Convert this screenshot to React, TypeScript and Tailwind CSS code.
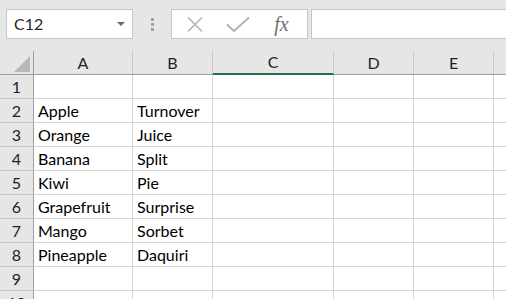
import React from "react";

const cols = [
  { key: "A", w: "w-[99px]" },
  { key: "B", w: "w-[80px]" },
  { key: "C", w: "w-[121px]" },
  { key: "D", w: "w-[80px]" },
  { key: "E", w: "w-[80px]" },
  { key: "", w: "w-[80px]" },
];

const data: Record<number, [string, string]> = {
  2: ["Apple", "Turnover"],
  3: ["Orange", "Juice"],
  4: ["Banana", "Split"],
  5: ["Kiwi", "Pie"],
  6: ["Grapefruit", "Surprise"],
  7: ["Mango", "Sorbet"],
  8: ["Pineapple", "Daquiri"],
};

const rows = [1, 2, 3, 4, 5, 6, 7, 8, 9, 10];

export default function App() {
  return (
    <div
      className="w-[506px] h-[299px] overflow-hidden bg-[#e6e6e6] text-[#1f1f1f]"
      style={{ fontFamily: "Lato, 'Open Sans', sans-serif" }}
    >
      {/* Formula bar */}
      <div className="h-[51px] flex items-start pt-[9px] pl-[6px]">
        <div className="w-[127px] h-[30px] bg-white border border-[#c6c6c6] flex items-center justify-between pl-[7px] pr-[7px]">
          <span className="text-[16px] text-[#262626]">C12</span>
          <svg width="8" height="4" viewBox="0 0 8 4">
            <path d="M0 0 H8 L4 4 Z" fill="#6b6b6b" />
          </svg>
        </div>
        <div className="w-[38px] h-[30px] flex flex-col items-center justify-center gap-[2px]">
          <div className="w-[3px] h-[3px] bg-[#a3a3a3]" />
          <div className="w-[3px] h-[3px] bg-[#a3a3a3]" />
          <div className="w-[3px] h-[3px] bg-[#a3a3a3]" />
        </div>
        <div className="w-[137px] h-[30px] bg-white border border-[#c6c6c6] flex items-center">
          <div className="w-[44px] flex justify-center pl-[2px]">
            <svg width="16" height="15" viewBox="0 0 16 15">
              <path d="M1 0.5 L15 14.5 M15 0.5 L1 14.5" stroke="#b3b3b3" strokeWidth="1.6" />
            </svg>
          </div>
          <div className="w-[44px] flex justify-center">
            <svg width="24" height="15" viewBox="0 0 24 15">
              <path d="M1 7.5 L8 14 L23 0.5" stroke="#b3b3b3" strokeWidth="2" fill="none" />
            </svg>
          </div>
          <div className="flex-1 flex justify-center pr-[4px]">
            <span
              className="italic text-[20px] leading-none text-[#6e6e6e]"
              style={{ fontFamily: "'Liberation Serif', serif" }}
            >
              fx
            </span>
          </div>
        </div>
        <div className="ml-[3px] flex-1 h-[30px] bg-white border border-[#c6c6c6] border-r-0" />
      </div>

      {/* Column headers */}
      <div className="flex h-[24px] border-b border-[#9e9e9e]">
        <div className="w-[34px] shrink-0 border-r border-[#9e9e9e] flex items-end justify-end pr-[3px] pb-[2px]">
          <svg width="16" height="16" viewBox="0 0 16 16">
            <path d="M16 0 V16 H0 Z" fill="#b8b8b8" />
          </svg>
        </div>
        {cols.map((c, i) => (
          <div
            key={i}
            className={`${c.w} shrink-0 border-r border-[#c8c8c8] flex items-center justify-center text-[16px] text-[#222] ${
              c.key === "C" ? "border-b-2 border-b-[#217346] -mb-[1px]" : ""
            }`}
          >
            {c.key}
          </div>
        ))}
      </div>

      {/* Rows */}
      {rows.map((r) => (
        <div key={r} className="flex h-[24px]">
          <div className="w-[34px] shrink-0 border-r border-b border-r-[#9e9e9e] border-b-[#c4c4c4] flex items-center justify-center text-[16px] text-[#222]">
            {r}
          </div>
          {cols.map((c, i) => (
            <div
              key={i}
              className={`${c.w} shrink-0 bg-white border-r border-b border-[#d4d4d4] flex items-center pl-[4px] text-[16px] text-black whitespace-nowrap`}
            >
              {i < 2 && data[r] ? data[r][i] : ""}
            </div>
          ))}
        </div>
      ))}
    </div>
  );
}
